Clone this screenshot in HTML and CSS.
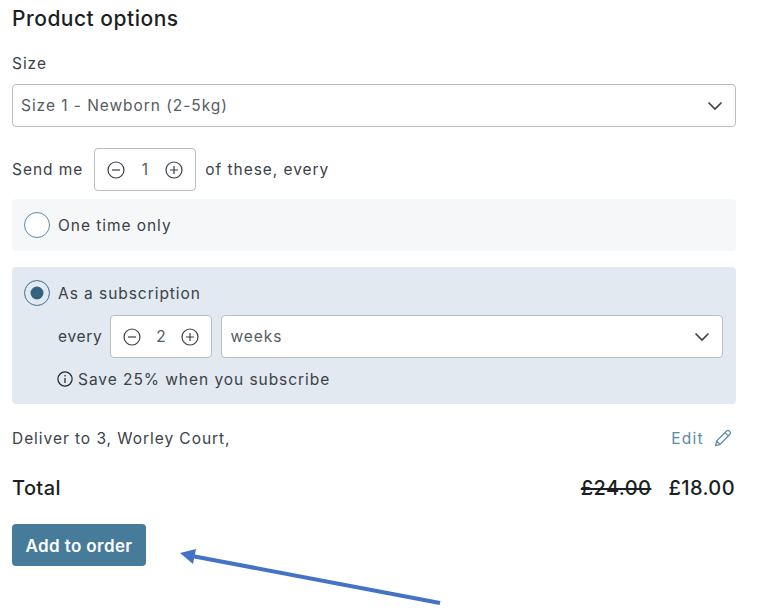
FILE: index.html
```html
<!DOCTYPE html>
<html lang="en">
<head>
<meta charset="utf-8">
<title>Product options</title>
<link rel="stylesheet" href="styles.css">
</head>
<body>
<main class="page">
  <h2 class="title">Product options</h2>
  <label class="label">Size</label>
  <div class="select size-select">
    <span>Size 1 - Newborn (2-5kg)</span>
    <svg class="chev" viewBox="0 0 16 10"><path d="M1.5 1.5 8 8l6.5-6.5"/></svg>
  </div>
  <div class="send-row">
    <span>Send me</span>
    <div class="stepper send-stepper">
      <svg class="icon" viewBox="0 0 18 18"><circle cx="9" cy="9" r="8"/><path d="M5 9h8"/></svg>
      <span class="qty">1</span>
      <svg class="icon" viewBox="0 0 18 18"><circle cx="9" cy="9" r="8"/><path d="M5 9h8M9 5v8"/></svg>
    </div>
    <span>of these, every</span>
  </div>
  <div class="panel panel-once">
    <span class="radio"></span>
    <span>One time only</span>
  </div>
  <div class="panel panel-sub">
    <div class="sub-head">
      <span class="radio radio-on"></span>
      <span>As a subscription</span>
    </div>
    <div class="every-row">
      <span class="every">every</span>
      <div class="stepper stepper-white">
        <svg class="icon" viewBox="0 0 18 18"><circle cx="9" cy="9" r="8"/><path d="M5 9h8"/></svg>
        <span class="qty">2</span>
        <svg class="icon" viewBox="0 0 18 18"><circle cx="9" cy="9" r="8"/><path d="M5 9h8M9 5v8"/></svg>
      </div>
      <div class="select weeks-select">
        <span>weeks</span>
        <svg class="chev" viewBox="0 0 16 10"><path d="M1.5 1.5 8 8l6.5-6.5"/></svg>
      </div>
    </div>
    <div class="save-row">
      <svg class="info" viewBox="0 0 18 18"><circle cx="9" cy="9" r="8"/><path d="M9 8v5.5M9 4.6v1.6"/></svg>
      <span>Save 25% when you subscribe</span>
    </div>
  </div>
  <div class="deliver-row">
    <span>Deliver to 3, Worley Court,</span>
    <a class="edit" href="#">Edit
      <svg class="pencil" viewBox="0 0 18 18"><path d="M1.6 16.6 2.6 12 12.6 2a1.9 1.9 0 0 1 2.7 0l.6.6a1.9 1.9 0 0 1 0 2.7L6 15.4ZM2.6 12 6 15.4M11 3.6l3.6 3.6"/></svg>
    </a>
  </div>
  <div class="total-row">
    <span class="total-label">Total</span>
    <span class="prices"><s>£24.00</s><span>£18.00</span></span>
  </div>
  <button class="add" type="button">Add to order</button>
</main>
<svg class="arrow" viewBox="0 0 759 608"><path class="shaft" d="M440 603 192 556"/><path class="head" d="M180 553 196 549 193 564Z"/></svg>
</body>
</html>
```
FILE: styles.css
```css
* { box-sizing: border-box; }
html, body { margin: 0; padding: 0; background: #fff; }
body {
  position: relative;
  width: 759px;
  height: 608px;
  overflow: hidden;
  font-family: "Inter", "Open Sans", sans-serif;
  font-size: 15.5px;
  letter-spacing: 0.95px;
  color: #3b4248;
}
.page {
  width: 736px;
  padding: 6px 0 0 12px;
  display: flex;
  flex-direction: column;
  align-items: stretch;
}
.title {
  margin: 0;
  height: 25px;
  line-height: 25px;
  font-size: 21px;
  font-weight: 500;
  letter-spacing: 0.5px;
  color: #1b1f23;
}
.label {
  margin-top: 23px;
  height: 20px;
  line-height: 20px;
}
.select {
  display: flex;
  align-items: center;
  justify-content: space-between;
  background: #fff;
  border: 1px solid #b9bdbf;
  border-radius: 4px;
  padding: 0 12px 0 8px;
  color: #555c62;
}
.size-select { height: 43px; margin-top: 10px; }
.chev {
  width: 16px;
  height: 10px;
  fill: none;
  stroke: #3a4046;
  stroke-width: 1.6;
}
.send-row {
  display: flex;
  align-items: center;
  gap: 8px;
  margin-top: 21px;
  height: 43px;
}
.stepper {
  display: flex;
  align-items: center;
  justify-content: center;
  width: 102px;
  height: 43px;
  border: 1px solid #b9bdbf;
  border-radius: 4px;
  color: #555c62;
}
.send-stepper { margin: 0 1px 0 3px; }
.stepper-white { background: #fff; flex: none; }
.qty { width: 40px; text-align: center; }
.icon, .info {
  width: 18px;
  height: 18px;
  fill: none;
  stroke: #3a4046;
  stroke-width: 1.2;
}
.panel {
  border-radius: 4px;
  padding-left: 12px;
}
.panel-once {
  display: flex;
  align-items: center;
  gap: 8px;
  height: 52px;
  margin-top: 8px;
  background: #f5f7f9;
}
.radio {
  flex: none;
  display: block;
  width: 26px;
  height: 26px;
  border-radius: 50%;
  border: 1px solid #5d8ba6;
  background: #fff;
}
.radio-on {
  background: #34637f;
  box-shadow: inset 0 0 0 5.5px #e2e9f0;
}
.panel-sub {
  height: 137px;
  margin-top: 16px;
  padding-top: 13px;
  background: #e2e9f0;
}
.sub-head {
  display: flex;
  align-items: center;
  gap: 8px;
  height: 26px;
}
.every-row {
  display: flex;
  align-items: center;
  gap: 8px;
  height: 43px;
  margin: 9px 13px 0 34px;
}
.every { letter-spacing: 0.7px; }
.weeks-select { flex: 1; height: 43px; margin-left: 1px; }
.save-row {
  display: flex;
  align-items: center;
  gap: 5px;
  margin: 10px 0 0 33px;
  height: 22px;
}
.info { width: 16px; height: 16px; stroke-width: 1.4; stroke: #23282c; }
.deliver-row {
  display: flex;
  align-items: center;
  justify-content: space-between;
  height: 22px;
  margin-top: 23px;
}
.edit {
  display: flex;
  align-items: center;
  gap: 10px;
  padding-right: 4px;
  color: #5a8aa8;
  letter-spacing: 1.3px;
  text-decoration: none;
}
.pencil {
  width: 18px;
  height: 18px;
  fill: none;
  stroke: #5a8aa8;
  stroke-width: 1.2;
}
.total-row {
  display: flex;
  align-items: center;
  justify-content: space-between;
  height: 26px;
  margin-top: 26px;
  padding-right: 1px;
  font-size: 20px;
  font-weight: 500;
  letter-spacing: 0.4px;
  color: #1b1f23;
}
.prices { display: flex; gap: 17px; }
.add {
  align-self: flex-start;
  width: 134px;
  height: 42px;
  margin-top: 23px;
  padding: 1px 0 0;
  border: 0;
  border-radius: 4px;
  background: #477b9a;
  color: #fff;
  font: 600 17px "Inter", "Open Sans", sans-serif;
  letter-spacing: 0.4px;
}
.arrow {
  position: absolute;
  left: 0;
  top: 0;
  width: 759px;
  height: 608px;
  pointer-events: none;
}
.shaft { fill: none; stroke: #4472c4; stroke-width: 4; }
.head { fill: #4472c4; }
```
